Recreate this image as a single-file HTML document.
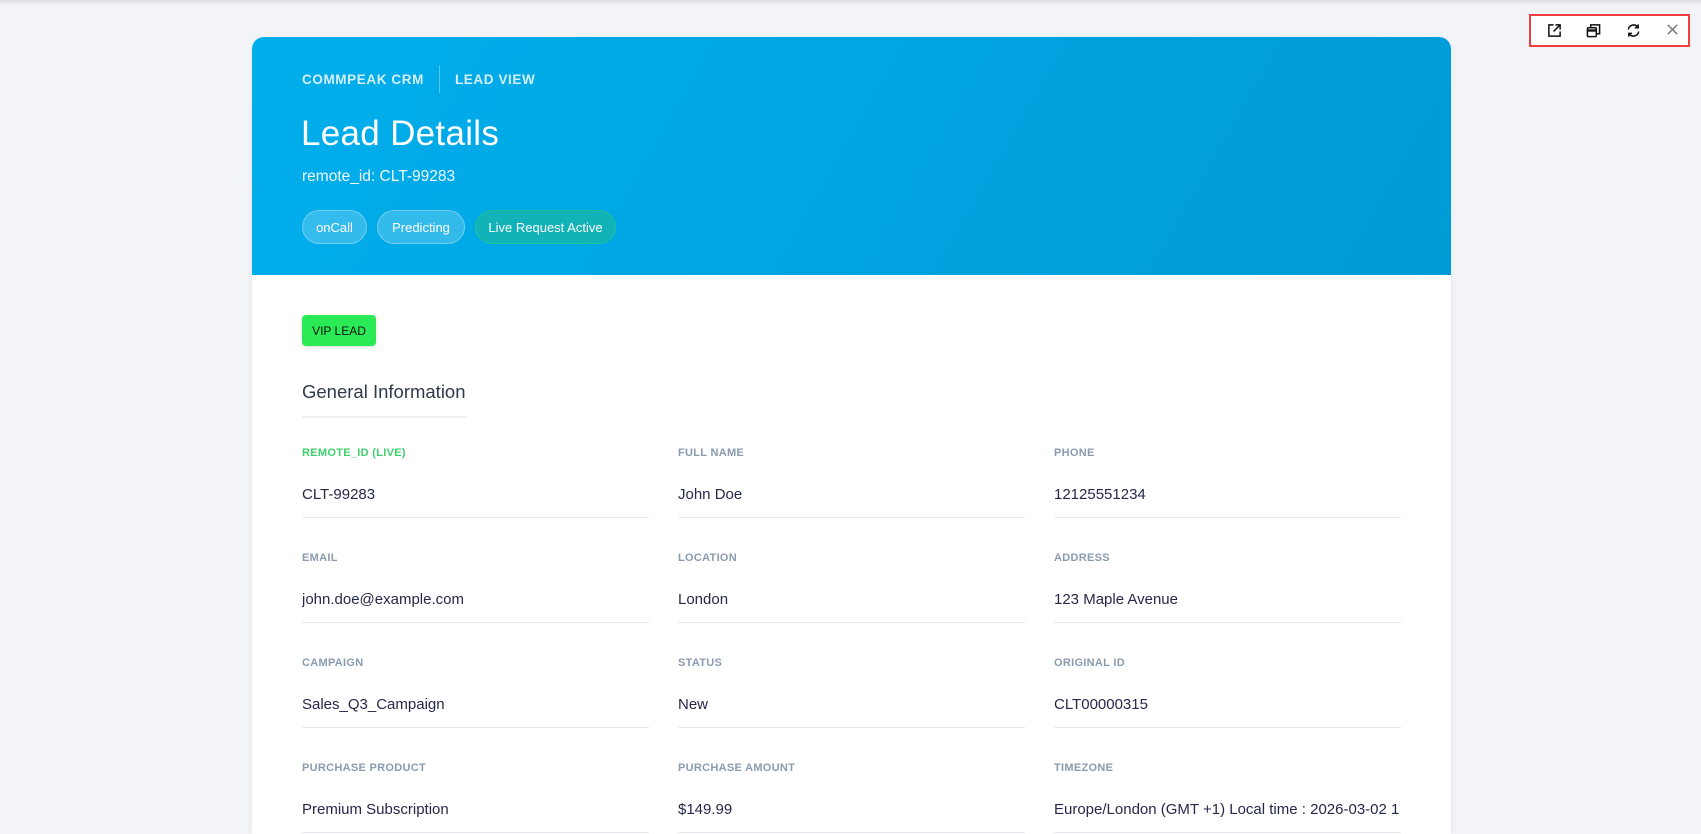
<!DOCTYPE html>
<html><head><meta charset="utf-8"><style>
*{box-sizing:border-box;margin:0;padding:0}
html,body{width:1701px;height:834px;overflow:hidden}
body{background:#f3f4f8;font-family:"Liberation Sans",sans-serif;position:relative}
.topshadow{position:absolute;left:0;top:0;width:1701px;height:6px;background:linear-gradient(#dcdde3,#f3f4f8)}
.card{position:absolute;left:252px;top:37px;width:1199px;height:797px;background:#fff;border-radius:12px 12px 0 0;overflow:hidden;box-shadow:0 2px 8px rgba(0,0,0,.05)}
.hdr{height:238px;background:linear-gradient(120deg,#00aeec,#009bd6);position:relative;color:#fff}
.brand{position:absolute;left:50px;top:28px;height:28px;display:flex;align-items:center;font-size:13.5px;font-weight:bold;letter-spacing:.6px;color:#d5effa}
.brand .sep{width:1px;height:28px;background:rgba(255,255,255,.35);margin:0 15px}
h1{position:absolute;left:49px;top:77px;font-size:35px;font-weight:normal;letter-spacing:.3px}
.rid{position:absolute;left:50px;top:131px;font-size:15.5px;color:#eef8fd}
.pill{position:absolute;top:173px;height:34px;border-radius:17px;font-size:13px;display:flex;align-items:center;justify-content:center;border:1px solid rgba(255,255,255,.3);background:rgba(255,255,255,.2);color:#fff}
.pill.g{background:#12b3b8;border-color:#1cc39a}
.vip{position:absolute;left:50px;top:278px;width:74px;height:31px;background:#2aea55;border-radius:4px;font-size:12px;display:flex;align-items:center;justify-content:center;color:#111;box-shadow:0 1px 3px rgba(0,0,0,.15)}
.gi{position:absolute;left:50px;top:344px;font-size:18.5px;color:#2f3a4c}
.giu{position:absolute;left:50px;top:379px;width:165px;height:2px;background:#eeeff4}
.f{position:absolute;width:347px;height:105px}
.f .l{position:absolute;top:2px;font-size:11px;font-weight:bold;color:#8a9bb0;letter-spacing:.3px}
.f .l.gr{color:#3dd16b}
.f .v{position:absolute;top:41px;font-size:15px;color:#252849;white-space:nowrap;width:347px;overflow:hidden}
.f .u{position:absolute;top:72px;left:0;width:347px;height:1px;background:#e6e7ec}
.tb{position:absolute;left:1529px;top:14px;width:161px;height:33px;border:2px solid #ef3f3f;background:#fff}
.tb svg{position:absolute;top:7px}
</style></head><body>
<div class="topshadow"></div>
<div class="card">
 <div class="hdr">
  <div class="brand">COMMPEAK CRM<span class="sep"></span>LEAD VIEW</div>
  <h1>Lead Details</h1>
  <div class="rid">remote_id: CLT-99283</div>
  <div class="pill" style="left:50px;width:65px">onCall</div>
  <div class="pill" style="left:125px;width:88px">Predicting</div>
  <div class="pill g" style="left:223px;width:141px">Live Request Active</div>
 </div>
 <div class="vip">VIP LEAD</div>
 <div class="gi">General Information</div>
 <div class="giu"></div>

 <div class="f" style="left:50px;top:408px"><div class="l gr">REMOTE_ID (LIVE)</div><div class="v">CLT-99283</div><div class="u"></div></div>
 <div class="f" style="left:426px;top:408px"><div class="l">FULL NAME</div><div class="v">John Doe</div><div class="u"></div></div>
 <div class="f" style="left:802px;top:408px"><div class="l">PHONE</div><div class="v">12125551234</div><div class="u"></div></div>

 <div class="f" style="left:50px;top:513px"><div class="l">EMAIL</div><div class="v">john.doe@example.com</div><div class="u"></div></div>
 <div class="f" style="left:426px;top:513px"><div class="l">LOCATION</div><div class="v">London</div><div class="u"></div></div>
 <div class="f" style="left:802px;top:513px"><div class="l">ADDRESS</div><div class="v">123 Maple Avenue</div><div class="u"></div></div>

 <div class="f" style="left:50px;top:618px"><div class="l">CAMPAIGN</div><div class="v">Sales_Q3_Campaign</div><div class="u"></div></div>
 <div class="f" style="left:426px;top:618px"><div class="l">STATUS</div><div class="v">New</div><div class="u"></div></div>
 <div class="f" style="left:802px;top:618px"><div class="l">ORIGINAL ID</div><div class="v">CLT00000315</div><div class="u"></div></div>

 <div class="f" style="left:50px;top:723px"><div class="l">PURCHASE PRODUCT</div><div class="v">Premium Subscription</div><div class="u"></div></div>
 <div class="f" style="left:426px;top:723px"><div class="l">PURCHASE AMOUNT</div><div class="v">$149.99</div><div class="u"></div></div>
 <div class="f" style="left:802px;top:723px"><div class="l">TIMEZONE</div><div class="v">Europe/London (GMT +1) Local time : 2026-03-02 1</div><div class="u"></div></div>
</div>

<div class="tb">
 <svg style="left:16px" width="15" height="15" viewBox="0 0 16 16" fill="none" stroke="#111" stroke-width="1.6"><path d="M7 2H2v12h12V9"/><path d="M9 2h5v5M14 2L7 9"/></svg>
 <svg style="left:55px" width="15" height="15" viewBox="0 0 16 16" fill="none" stroke="#111" stroke-width="1.6"><rect x="1.5" y="5" width="9.5" height="9.5" rx="1"/><path d="M1.5 8h9.5" stroke-width="2.5"/><path d="M5 5V2h9.5v9.5H11"/></svg>
 <svg style="left:95px" width="15" height="15" viewBox="0 0 16 16" fill="none" stroke="#111" stroke-width="1.6"><path d="M2.5 7A5.5 5.5 0 0 1 12.5 4.5"/><path d="M13 1.5v3.5H9.5"/><path d="M13.5 9A5.5 5.5 0 0 1 3.5 11.5"/><path d="M3 14.5V11h3.5"/></svg>
 <svg style="left:135px" width="13" height="13" viewBox="0 0 14 14" stroke="#777" stroke-width="1.6"><path d="M2 2l10 10M12 2L2 12"/></svg>
</div>
</body></html>
